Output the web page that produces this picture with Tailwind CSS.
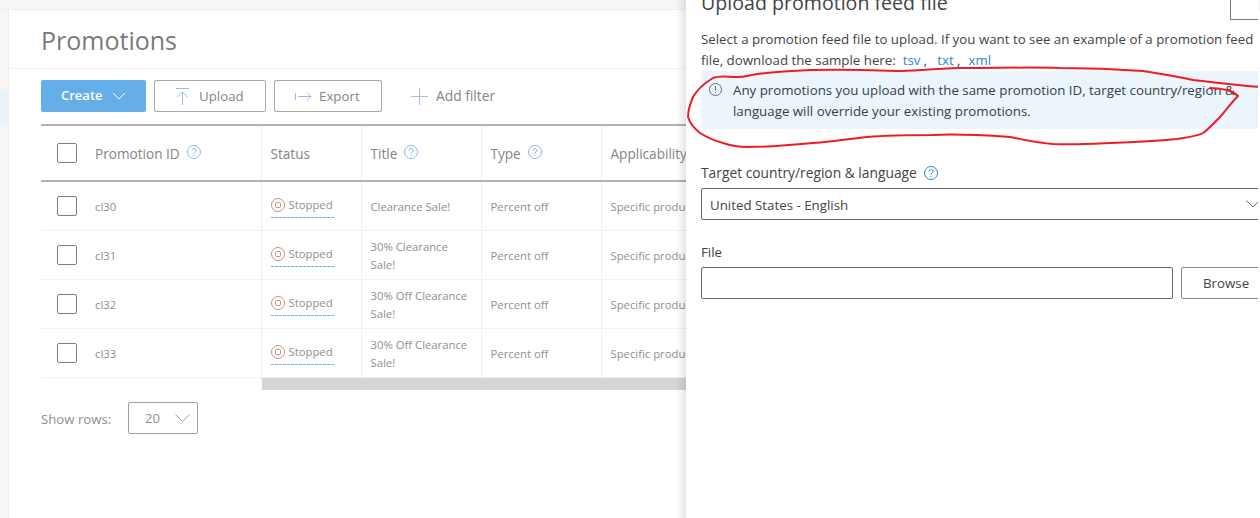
<!DOCTYPE html>
<html lang="en">
<head>
    <meta charset="UTF-8">
    <meta name="viewport" content="width=device-width, initial-scale=1.0">
    <script src="https://cdn.jsdelivr.net/npm/@tailwindcss/browser@4"></script>
    <title>Promotions</title>
</head>
<body class="font-['Open_Sans',sans-serif] bg-white">
<div class="relative h-[518px] w-[1260px] overflow-hidden">
    <!--Top strip-->
    <div class="h-[10px] bg-[#f7f6f4] border-b border-[#eeeeee]"></div>
    <div class="flex h-[508px]">
        <!--Left nav strip-->
        <div class="w-[9px] shrink-0 bg-[#f7f6f4] border-r border-[#eeeeee] pt-[79px]">
            <div class="h-[36px] bg-[#e8f3fa]"></div>
        </div>
        <!--Main-->
        <div class="grow min-w-0">
            <div class="h-[59px] border-b border-[#f3f3f3] pl-[32px] pt-[11px] text-[25px] leading-[38px] text-[#7a7a7a]">Promotions</div>
            <!--Toolbar-->
            <div class="flex items-center h-[32px] mt-[11px] ml-[32px] gap-[8px] text-[13.300px] font-medium text-[#858585]">
                <div class="w-[105px] h-[32px] rounded-[2px] bg-[#65aee8] text-white flex items-center pl-[20px] gap-[9px]">
                    <span class="mb-[1px] font-semibold text-[13px]">Create</span>
                    <svg width="14" height="8" viewBox="0 0 14 8" fill="none" stroke="#ffffff" stroke-width="1"><path d="M1 1l6 6 6-6"/></svg>
                </div>
                <div class="w-[112px] h-[32px] rounded-[2px] border border-[#a9a9a9] flex items-center pl-[21px] gap-[10px]">
                    <svg width="13" height="17" viewBox="0 0 13 17" fill="none" stroke="#9cb8e4" stroke-width="1"><path d="M0 .5h13M6.500 4v13M1.500 9l5-5 5 5"/></svg>
                    <span class="mt-[1px]">Upload</span>
                </div>
                <div class="w-[108px] h-[32px] rounded-[2px] border border-[#a9a9a9] flex items-center pl-[20px] gap-[7px]">
                    <svg width="17" height="9" viewBox="0 0 17 9" fill="none" stroke="#9cb8e4" stroke-width="1"><path d="M.5 1v7M3 4.500h13M12 .5l4 4-4 4"/></svg>
                    <span class="mt-[1px]">Export</span>
                </div>
                <div class="flex items-center ml-[21px] gap-[8px]">
                    <svg width="17" height="17" viewBox="0 0 17 17" fill="none" stroke="#a9bfe6" stroke-width="1"><path d="M8.500 0v17M0 8.500h17"/></svg>
                    <span class="mt-[1px] text-[13.800px]">Add filter</span>
                </div>
            </div>
            <!--Table-->
            <table class="ml-[32px] mt-[12px] table-fixed w-[760px] border-collapse text-[11.300px] leading-[18px] text-[#8f8f8f] [&_td]:align-middle [&_td:nth-child(n+3)]:pt-[2px] [&_th:nth-child(n+2)]:pt-[2px]">
                <colgroup><col class="w-[220px]"><col class="w-[100px]"><col class="w-[120px]"><col class="w-[120px]"><col class="w-[200px]"></colgroup>
                <thead>
                    <tr class="h-[56px] border-y-[2px] border-[#b1b1b1] text-[13.600px] text-[#858585] text-left">
                        <th class="font-medium border-r border-[#efefef] pl-[16px]">
                            <div class="flex items-center">
                                <span class="w-[20px] h-[20px] rounded-[2px] border border-[#7f7f7f] mr-[18px]"></span>
                                <span class="mt-[2px]">Promotion ID</span>
                                <svg class="ml-[7px] mb-[2px]" width="14" height="14" viewBox="0 0 14 14" fill="none" stroke="#8ab6ea"><circle cx="7" cy="7" r="6.500"/><path d="M5 5.500a2 2 0 1 1 3 1.700c-.7.4-1 .8-1 1.600M7 10v1"/></svg>
                            </div>
                        </th>
                        <th class="font-medium border-r border-[#efefef] pl-[9px]">Status</th>
                        <th class="font-medium border-r border-[#efefef] pl-[9px]">
                            <div class="flex items-center">
                                <span>Title</span>
                                <svg class="ml-[7px] mb-[4px]" width="14" height="14" viewBox="0 0 14 14" fill="none" stroke="#8ab6ea"><circle cx="7" cy="7" r="6.500"/><path d="M5 5.500a2 2 0 1 1 3 1.700c-.7.4-1 .8-1 1.600M7 10v1"/></svg>
                            </div>
                        </th>
                        <th class="font-medium border-r border-[#efefef] pl-[9px]">
                            <div class="flex items-center">
                                <span>Type</span>
                                <svg class="ml-[7px] mb-[4px]" width="14" height="14" viewBox="0 0 14 14" fill="none" stroke="#8ab6ea"><circle cx="7" cy="7" r="6.500"/><path d="M5 5.500a2 2 0 1 1 3 1.700c-.7.4-1 .8-1 1.600M7 10v1"/></svg>
                            </div>
                        </th>
                        <th class="font-medium pl-[9px]">Applicability</th>
                    </tr>
                </thead>
                <tbody>
                    <tr class="h-[49px] border-b border-[#f1f1f1]">
                        <td class="border-r border-[#efefef] pl-[16px]"><div class="flex items-center"><span class="w-[20px] h-[20px] rounded-[2px] border border-[#7f7f7f] mr-[18px]"></span><span class="mt-[2px]">cl30</span></div></td>
                        <td class="border-r border-[#efefef] pl-[9px]"><div class="w-[63px] mt-[3px]"><div class="flex items-center gap-[4px]"><svg width="14" height="14" viewBox="0 0 14 14" fill="none" stroke="#cf8a86"><circle cx="7" cy="7" r="6.500"/><rect x="4.500" y="4.500" width="5" height="5" rx="1"/></svg><span>Stopped</span></div><div class="h-px mt-[3px] bg-[repeating-linear-gradient(90deg,#65aee8_0_3px,transparent_3px_4px)]"></div></div></td>
                        <td class="border-r border-[#efefef] pl-[9px] pr-[8px]">Clearance Sale!</td>
                        <td class="border-r border-[#efefef] pl-[9px]">Percent off</td>
                        <td class="pl-[9px]">Specific products</td>
                    </tr>
                    <tr class="h-[49px] border-b border-[#f1f1f1]">
                        <td class="border-r border-[#efefef] pl-[16px]"><div class="flex items-center"><span class="w-[20px] h-[20px] rounded-[2px] border border-[#7f7f7f] mr-[18px]"></span><span class="mt-[2px]">cl31</span></div></td>
                        <td class="border-r border-[#efefef] pl-[9px]"><div class="w-[63px] mt-[3px]"><div class="flex items-center gap-[4px]"><svg width="14" height="14" viewBox="0 0 14 14" fill="none" stroke="#cf8a86"><circle cx="7" cy="7" r="6.500"/><rect x="4.500" y="4.500" width="5" height="5" rx="1"/></svg><span>Stopped</span></div><div class="h-px mt-[3px] bg-[repeating-linear-gradient(90deg,#65aee8_0_3px,transparent_3px_4px)]"></div></div></td>
                        <td class="border-r border-[#efefef] pl-[9px] pr-[8px]">30% Clearance Sale!</td>
                        <td class="border-r border-[#efefef] pl-[9px]">Percent off</td>
                        <td class="pl-[9px]">Specific products</td>
                    </tr>
                    <tr class="h-[49px] border-b border-[#f1f1f1]">
                        <td class="border-r border-[#efefef] pl-[16px]"><div class="flex items-center"><span class="w-[20px] h-[20px] rounded-[2px] border border-[#7f7f7f] mr-[18px]"></span><span class="mt-[2px]">cl32</span></div></td>
                        <td class="border-r border-[#efefef] pl-[9px]"><div class="w-[63px] mt-[3px]"><div class="flex items-center gap-[4px]"><svg width="14" height="14" viewBox="0 0 14 14" fill="none" stroke="#cf8a86"><circle cx="7" cy="7" r="6.500"/><rect x="4.500" y="4.500" width="5" height="5" rx="1"/></svg><span>Stopped</span></div><div class="h-px mt-[3px] bg-[repeating-linear-gradient(90deg,#65aee8_0_3px,transparent_3px_4px)]"></div></div></td>
                        <td class="border-r border-[#efefef] pl-[9px] pr-[8px]">30% Off Clearance Sale!</td>
                        <td class="border-r border-[#efefef] pl-[9px]">Percent off</td>
                        <td class="pl-[9px]">Specific products</td>
                    </tr>
                    <tr class="h-[49px] border-b border-[#f1f1f1]">
                        <td class="border-r border-[#efefef] pl-[16px]"><div class="flex items-center"><span class="w-[20px] h-[20px] rounded-[2px] border border-[#7f7f7f] mr-[18px]"></span><span class="mt-[2px]">cl33</span></div></td>
                        <td class="border-r border-[#efefef] pl-[9px]"><div class="w-[63px] mt-[3px]"><div class="flex items-center gap-[4px]"><svg width="14" height="14" viewBox="0 0 14 14" fill="none" stroke="#cf8a86"><circle cx="7" cy="7" r="6.500"/><rect x="4.500" y="4.500" width="5" height="5" rx="1"/></svg><span>Stopped</span></div><div class="h-px mt-[3px] bg-[repeating-linear-gradient(90deg,#65aee8_0_3px,transparent_3px_4px)]"></div></div></td>
                        <td class="border-r border-[#efefef] pl-[9px] pr-[8px]">30% Off Clearance Sale!</td>
                        <td class="border-r border-[#efefef] pl-[9px]">Percent off</td>
                        <td class="pl-[9px]">Specific products</td>
                    </tr>
                </tbody>
            </table>
            <!--Scrollbar-->
            <div class="ml-[253px] w-[440px] h-[12px] bg-[#d6d6d6]"></div>
            <!--Pager-->
            <div class="flex items-center ml-[32px] mt-[12px] text-[13.200px] text-[#8f8f8f]">
                <span class="w-[87px] pt-[4px]">Show rows:</span>
                <div class="w-[70px] h-[32px] rounded-[2px] border border-[#a0a0a0] flex items-center pl-[16px] gap-[15px]">
                    <span class="pt-[2px]">20</span>
                    <svg width="15" height="8" viewBox="0 0 15 8" fill="none" stroke="#a0a0a0"><path d="M.5.500l7 7 7-7"/></svg>
                </div>
            </div>
        </div>
    </div>

    <!--Upload side panel-->
    <div class="absolute top-0 left-[686px] w-[572px] h-[518px] overflow-hidden bg-white pl-[15px] text-[13.300px] text-[#444444]">
        <div class="flex justify-between h-[20px]">
            <div class="text-[19.600px] font-medium leading-[26px] -mt-[10px] text-[#444444]">Upload promotion feed file</div>
            <div class="w-[28px] h-[20px] border-l border-b border-[#777777]"></div>
        </div>
        <p class="mt-[9px] w-[560px] leading-[21px]">Select a promotion feed file to upload. If you want to see an example of a promotion feed file, download the sample here:&nbsp; <span class="text-[#2b88d8]">tsv</span> ,&nbsp; <span class="text-[#2b88d8] ml-[3px]">txt</span> ,&nbsp; <span class="text-[#2b88d8] ml-[1px]">xml</span></p>
        <div class="flex w-[557px] h-[58px] bg-[#edf5fc] pl-[8px] pt-[9px] leading-[21px] text-[#333f4d]">
            <svg class="mt-[3px] shrink-0" width="13" height="13" viewBox="0 0 13 13" fill="none" stroke="#5f6f80"><circle cx="6.500" cy="6.500" r="6"/><path d="M6.500 3v4.500M6.500 9v1"/></svg>
            <p class="ml-[11px] w-[530px]">Any promotions you upload with the same promotion ID, target country/region &amp; language will override your existing promotions.</p>
        </div>
        <div class="flex items-center mt-[34px] h-[20px] font-medium text-[13.800px]">
            <span>Target country/region &amp; language</span>
            <svg class="ml-[7px]" width="14" height="14" viewBox="0 0 14 14" fill="none" stroke="#2b88d8"><circle cx="7" cy="7" r="6.500"/><path d="M5 5.500a2 2 0 1 1 3 1.700c-.7.4-1 .8-1 1.600M7 10v1"/></svg>
        </div>
        <div class="flex items-center justify-between w-[560px] h-[32px] mt-[5px] rounded-[2px] border border-[#666666] pl-[8px]">
            <span class="pt-[3px]">United States - English</span>
            <svg width="14" height="8" viewBox="0 0 14 8" fill="none" stroke="#666666"><path d="M.5.500l6.500 6.500 6.500-6.500"/></svg>
        </div>
        <div class="mt-[22px] h-[20px] font-medium leading-[20px]">File</div>
        <div class="flex gap-[8px] mt-[5px]">
            <div class="w-[472px] shrink-0 h-[32px] rounded-[2px] border border-[#666666]"></div>
            <div class="w-[90px] shrink-0 h-[32px] rounded-[2px] border border-[#8a8a8a] pl-[21px] leading-[30px] font-medium">Browse</div>
        </div>
    </div>
    <!--Panel edge shadow-->
    <div class="absolute top-0 left-[676px] w-[10px] h-[518px] bg-gradient-to-r from-transparent to-black/10"></div>

    <!--Red hand-drawn annotation-->
    <svg class="absolute top-0 left-0 pointer-events-none" width="1258" height="518" viewBox="0 0 1258 518" fill="none" stroke="#ee1c24" stroke-width="2" stroke-linecap="round" stroke-linejoin="round">
        <path d="M1260 87C1245 86 1227 84 1193 80C1175 76 1160 74 1143 71C1115 69 1085 68 1060 68C1030 67 1000 68 960 68C930 69 910 71 897 71C870 70 840 69 813 70C790 71 765 72 747 76C735 79 722 74 713 78C703 84 697 90 693 97C690 104 688 110 688 117C690 124 695 129 700 133C708 138 715 141 723 143C732 146 740 147 747 147C770 147 792 145 813 143C830 142 850 139 867 137C890 135 910 135 933 135C950 134 980 135 1010 137C1025 140 1040 143 1053 144C1075 145 1090 144 1110 143C1135 142 1155 141 1177 139C1190 137 1198 136 1203 133C1209 129 1214 123 1220 117C1226 110 1232 102 1238 96C1234 92 1231 91 1227 90C1222 89 1216 88 1210 88"/>
    </svg>
</div>
</body>
</html>
